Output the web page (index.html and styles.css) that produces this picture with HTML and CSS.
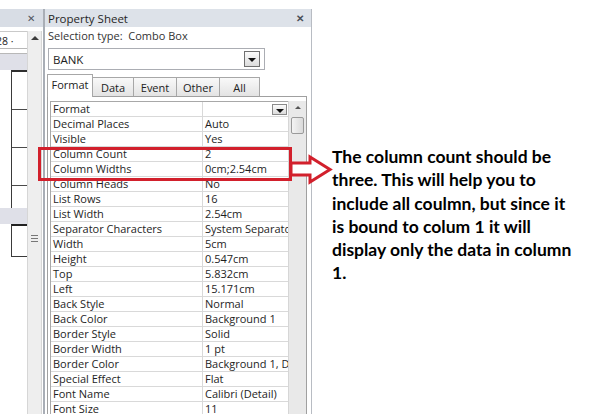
FILE: index.html
```html
<!DOCTYPE html>
<html>
<head>
<meta charset="utf-8">
<link rel="stylesheet" href="styles.css">
</head>
<body>
<div class="screen">
  <div class="lp">
    <div class="lp-title"><span class="lp-x">✕</span></div>
    <div class="lp-body">
      <div class="lp-doc">
        <div class="lp-field">28 ·</div>
        <div class="lp-rule"></div>
        <div class="lp-band"></div>
        <div class="lp-sec1">
          <div class="lp-tick"></div>
          <div class="lp-tick"></div>
          <div class="lp-tick"></div>
        </div>
        <div class="lp-band"></div>
        <div class="lp-sec2"></div>
      </div>
      <div class="lp-scroll">
        <div class="up-arrow"></div>
        <div class="grip"><i></i><i></i><i></i></div>
      </div>
    </div>
  </div>

  <div class="ps">
    <div class="ps-title"><span>Property Sheet</span><span class="ps-close">✕</span></div>
    <div class="ps-sel">Selection type:  Combo Box</div>
    <div class="combo"><span>BANK</span><span class="dd-btn"><span class="tri"></span></span></div>
    <div class="tabs">
      <div class="tab active w-format">Format</div>
      <div class="tab w-data">Data</div>
      <div class="tab w-event">Event</div>
      <div class="tab w-other">Other</div>
      <div class="tab w-all">All</div>
    </div>
    <div class="tabpanel">
      <div class="grid">
        <div class="row"><div class="name">Format</div><div class="val"><span class="dd-btn small"><span class="tri"></span></span></div></div>
        <div class="row"><div class="name">Decimal Places</div><div class="val">Auto</div></div>
        <div class="row"><div class="name">Visible</div><div class="val">Yes</div></div>
        <div class="row"><div class="name">Column Count</div><div class="val">2</div></div>
        <div class="row"><div class="name">Column Widths</div><div class="val">0cm;2.54cm</div></div>
        <div class="row"><div class="name">Column Heads</div><div class="val">No</div></div>
        <div class="row"><div class="name">List Rows</div><div class="val">16</div></div>
        <div class="row"><div class="name">List Width</div><div class="val">2.54cm</div></div>
        <div class="row"><div class="name">Separator Characters</div><div class="val">System Separator</div></div>
        <div class="row"><div class="name">Width</div><div class="val">5cm</div></div>
        <div class="row"><div class="name">Height</div><div class="val">0.547cm</div></div>
        <div class="row"><div class="name">Top</div><div class="val">5.832cm</div></div>
        <div class="row"><div class="name">Left</div><div class="val">15.171cm</div></div>
        <div class="row"><div class="name">Back Style</div><div class="val">Normal</div></div>
        <div class="row"><div class="name">Back Color</div><div class="val">Background 1</div></div>
        <div class="row"><div class="name">Border Style</div><div class="val">Solid</div></div>
        <div class="row"><div class="name">Border Width</div><div class="val">1 pt</div></div>
        <div class="row"><div class="name">Border Color</div><div class="val">Background 1, Darker</div></div>
        <div class="row"><div class="name">Special Effect</div><div class="val">Flat</div></div>
        <div class="row"><div class="name">Font Name</div><div class="val">Calibri (Detail)</div></div>
        <div class="row"><div class="name">Font Size</div><div class="val">11</div></div>
      </div>
      <div class="vscroll">
        <div class="up-arrow small"></div>
        <div class="thumb"></div>
      </div>
    </div>
  </div>

  <div class="note">The column count should be<br>three. This will help you to<br>include all coulmn, but since it<br>is bound to colum 1 it will<br>display only the data in column<br>1.</div>
</div>

<div class="redbox"></div>
<svg class="arrow" width="46" height="36" viewBox="0 0 46 36">
  <polygon points="1,9 20,9 20,3 40,15.5 20,28 20,21 1,21" fill="#ffffff" stroke="#d2202c" stroke-width="3" stroke-linejoin="miter"/>
</svg>
</body>
</html>
```

FILE: styles.css
```css
* { box-sizing: border-box; }

body {
  margin: 0;
  width: 590px;
  height: 414px;
  overflow: hidden;
  background: #ffffff;
  font-family: "Open Sans", "Noto Sans", sans-serif;
  color: #1e1e1e;
  position: relative;
}

.screen {
  display: flex;
  margin-top: 9px;
  height: 405px;
}

/* ---------- left pane ---------- */
.lp {
  width: 44px;
  display: flex;
  flex-direction: column;
  border-right: 1px solid #a9aeb6;
}
.lp-title {
  height: 18px;
  background: #d8dde5;
  display: flex;
  align-items: center;
  justify-content: flex-end;
  padding-right: 8px;
}
.lp-x { font-size: 10px; color: #505560; line-height: 10px; }
.lp-body {
  flex: 1;
  display: flex;
  padding-top: 4px;
}
.lp-doc {
  width: 27px;
  display: flex;
  flex-direction: column;
  overflow: hidden;
}
.lp-field {
  height: 17px;
  border-top: 1px solid #c9c9c9;
  font-size: 10.5px;
  line-height: 18px;
  text-indent: -4px;
  white-space: nowrap;
  color: #222;
  flex: none;
}
.lp-rule {
  height: 6px;
  border-top: 1px solid #b8b8b8;
  border-bottom: 1px solid #b8b8b8;
  flex: none;
}
.lp-band {
  height: 16px;
  background: #dfe0e8;
  flex: none;
}
.lp-sec1 {
  margin-left: 11px;
  height: 138px;
  border-top: 2px solid #2e2e2e;
  border-left: 1px solid #3a3a3a;
  flex: none;
}
.lp-tick {
  height: 38px;
  border-bottom: 1px solid #4a4a4a;
}
.lp-sec2 {
  margin-left: 11px;
  height: 33px;
  border-top: 2px solid #222;
  border-left: 1px solid #3a3a3a;
  border-bottom: 1px solid #3a3a3a;
  flex: none;
}
.lp-scroll {
  width: 15px;
  background: #eeeeee;
  border-left: 1px solid #d6d6d6;
  border-right: 1px solid #d6d6d6;
  display: flex;
  flex-direction: column;
  align-items: center;
}
.up-arrow {
  margin-top: 5px;
  width: 0;
  height: 0;
  border-left: 4px solid transparent;
  border-right: 4px solid transparent;
  border-bottom: 4px solid #3c3c3c;
}
.grip {
  margin-top: 195px;
  display: flex;
  flex-direction: column;
  gap: 2px;
}
.grip i {
  display: block;
  width: 7px;
  height: 1px;
  background: #777;
}

/* ---------- property sheet ---------- */
.ps {
  width: 268px;
  display: flex;
  flex-direction: column;
  border-left: 1px solid #a9aeb6;
  border-right: 1px solid #b8bcc3;
}
.ps-title {
  height: 18px;
  background: #dde2e9;
  display: flex;
  align-items: center;
  justify-content: space-between;
  padding: 0 7px 0 3px;
  font-size: 11.5px;
  color: #262626;
}
.ps-close { font-size: 10px; color: #4a4f58; font-weight: bold; }
.ps-sel {
  height: 18px;
  line-height: 18px;
  padding-left: 3px;
  font-size: 11px;
  color: #333;
  white-space: pre;
}
.combo {
  margin: 3px 0 0 3px;
  width: 217px;
  height: 22px;
  border: 1px solid #abadb3;
  display: flex;
  align-items: center;
  justify-content: space-between;
  padding: 0 4px 0 4px;
  font-size: 11.5px;
  flex: none;
}
.dd-btn {
  width: 16px;
  height: 16px;
  border: 1px solid #707070;
  background: linear-gradient(#fbfbfb, #dcdcdc);
  display: flex;
  align-items: center;
  justify-content: center;
  padding-top: 2px;
}
.dd-btn.small {
  width: 15px;
  height: 11px;
  border-color: #8a8a8a;
  padding-top: 3px;
}
.tri {
  width: 0;
  height: 0;
  border-left: 4px solid transparent;
  border-right: 4px solid transparent;
  border-top: 4px solid #111;
}

.tabs {
  margin: 4px 0 0 2px;
  height: 22px;
  display: flex;
  align-items: flex-end;
  position: relative;
  z-index: 1;
  flex: none;
}
.tab {
  height: 19px;
  border: 1px solid #a7a7a7;
  border-bottom: none;
  background: linear-gradient(#f9f9f9, #e3e3e3);
  font-size: 11px;
  display: flex;
  align-items: center;
  justify-content: center;
  margin-left: -1px;
  color: #222;
}
.tab.active {
  height: 23px;
  background: #ffffff;
  margin-bottom: -1px;
  margin-left: 0;
  padding-bottom: 3px;
}
.w-format { width: 46px; }
.w-data { width: 42px; }
.w-event { width: 44px; }
.w-other { width: 44px; }
.w-all { width: 41px; }

.tabpanel {
  margin-left: 2px;
  width: 260px;
  flex: 1;
  border: 1px solid #a0a0a0;
  border-bottom: none;
  display: flex;
  padding: 4px 0 0 2px;
  overflow: hidden;
}
.grid {
  width: 238px;
  border-top: 1px solid #a8a8a8;
  border-left: 1px solid #a8a8a8;
  flex: none;
}
.row {
  height: 15px;
  display: flex;
  border-bottom: 1px solid #d9d9d9;
  font-size: 11px;
  line-height: 14px;
}
.name {
  width: 152px;
  border-right: 1px solid #d9d9d9;
  padding-left: 2px;
  white-space: nowrap;
  overflow: hidden;
}
.val {
  width: 85px;
  padding-left: 2px;
  white-space: nowrap;
  overflow: hidden;
  display: flex;
  align-items: center;
  justify-content: space-between;
}
.val .dd-btn { margin-left: auto; margin-right: 1px; }
.vscroll {
  width: 18px;
  background: #e9e9e9;
  border-left: 1px solid #d6d6d6;
  display: flex;
  flex-direction: column;
  align-items: center;
}
.up-arrow.small {
  margin-top: 5px;
  border-left-width: 3px;
  border-right-width: 3px;
  border-bottom-width: 3px;
  border-bottom-color: #555;
}
.thumb {
  margin-top: 8px;
  width: 13px;
  height: 17px;
  border: 1px solid #9a9a9a;
  border-radius: 2px;
  background: linear-gradient(90deg, #f4f4f4, #dadada);
}

/* ---------- annotation ---------- */
.note {
  flex: 1;
  padding: 136px 0 0 20px;
  font-family: "Lato", "Open Sans", sans-serif;
  font-weight: bold;
  font-size: 17.5px;
  line-height: 23.3px;
  color: #000;
  white-space: nowrap;
}
.redbox {
  position: absolute;
  left: 38px;
  top: 147px;
  width: 254px;
  height: 34px;
  border: 3px solid #d2202c;
}
.arrow {
  position: absolute;
  left: 290px;
  top: 154px;
}
```
